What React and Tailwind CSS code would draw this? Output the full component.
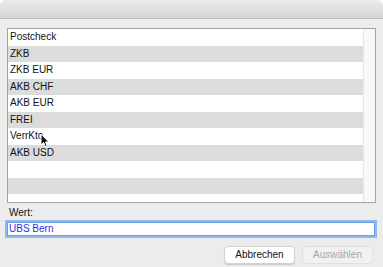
import React from "react";

const items = ["Postcheck", "ZKB", "ZKB EUR", "AKB CHF", "AKB EUR", "FREI", "VerrKto", "AKB USD", "", "", ""];

const Cursor = () => (
  <svg width="10" height="15" viewBox="0 0 10 15" className="absolute left-[32px] top-[104px]">
    <path d="M1 1 L1 12 L3.6 9.6 L5.6 14 L7.3 13.2 L5.4 9 L8.8 9 Z" fill="#111" stroke="#fff" strokeWidth="1" strokeLinejoin="round" />
  </svg>
);

const App = () => {
  return (
    <div
      className="w-[383px] h-[267px] bg-[#ececec] overflow-hidden rounded-t-[6px] text-[10px] text-[#111]"
      style={{ fontFamily: '"Liberation Sans", Arial, sans-serif' }}
    >
      <div className="h-[19px] bg-gradient-to-b from-[#ebebeb] to-[#d5d5d5] border-b border-[#b9b9b9]" />

      <div className="relative mx-[7px] mt-[9px] h-[175px] border border-[#a3a3a3] bg-white flex overflow-hidden">
        <div className="flex-1">
          {items.map((item, i) => (
            <div
              key={i}
              className={`h-[16.5px] pl-[2px] flex items-center leading-none ${i % 2 === 1 ? "bg-[#dcdcdc]" : "bg-white"}`}
            >
              {item}
            </div>
          ))}
        </div>
        <div className="w-[12px] bg-[#f8f8f8] border-l border-[#e6e6e6]" />
        <Cursor />
      </div>

      <div className="ml-[9px] mt-[5px] leading-none h-[11px]">Wert:</div>

      <div className="ml-[7px] mt-[3px] w-[368px] h-[14px] bg-white border border-[#6d9fdc] ring-2 ring-[#8fbaf0] flex items-center pl-[1px] text-[#2f2ff5] leading-none">
        UBS Bern
      </div>

      <div className="flex justify-end gap-[7px] mr-[10px] mt-[10px]">
        <button className="w-[71px] h-[18px] bg-white rounded-[4px] border border-[#d2d2d2] shadow-[0_1px_1px_rgba(0,0,0,0.15)] text-[10px] text-[#111] leading-none">
          Abbrechen
        </button>
        <button className="w-[71px] h-[18px] bg-[#f1f1f1] rounded-[4px] border border-[#e0e0e0] text-[10px] text-[#a8a8a8] leading-none">
          Auswählen
        </button>
      </div>
    </div>
  );
};

export default App;
